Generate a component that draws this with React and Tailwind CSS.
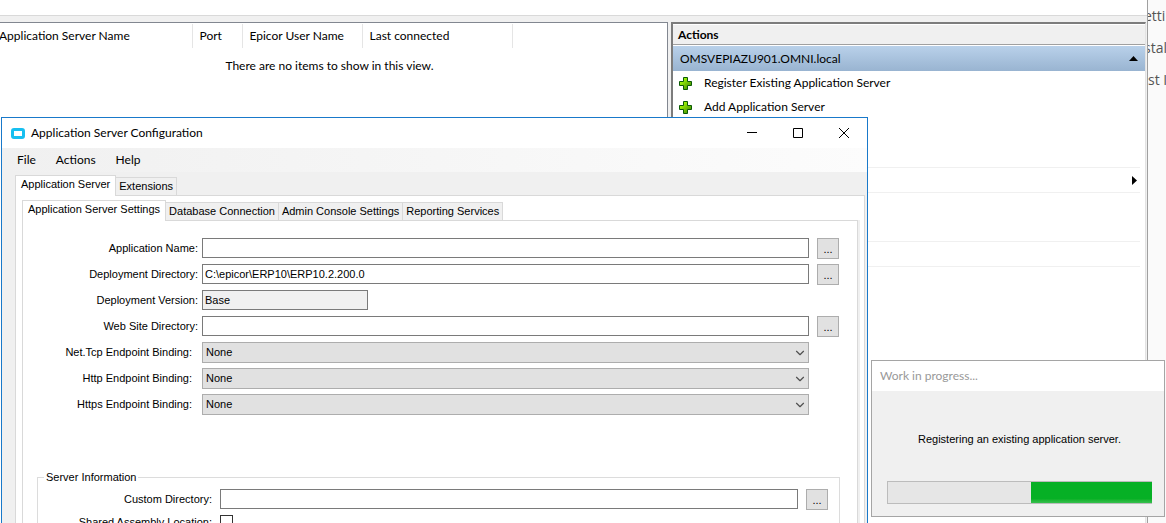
import { useState } from 'react';
import { ChevronDown } from 'lucide-react';

const columns = ['Application Server Name', 'Port', 'Epicor User Name', 'Last connected'];
const bindings = ['Net.Tcp Endpoint Binding:', 'Http Endpoint Binding:', 'Https Endpoint Binding:'];
const settingsTabs = ['Application Server Settings', 'Database Connection', 'Admin Console Settings', 'Reporting Services'];

const PlusIcon = () => (
  <svg width="13" height="13" viewBox="0 0 13 13" className="shrink-0">
    <defs>
      <linearGradient id="plus" x1="0" y1="0" x2="1" y2="1">
        <stop offset="0.2" stopColor="#a4fa08" />
        <stop offset="1" stopColor="#2f7a00" />
      </linearGradient>
    </defs>
    <path d="M4.5 .5h4v4h4v4h-4v4h-4v-4h-4v-4h4z" fill="url(#plus)" stroke="#0b5a06" />
  </svg>
);

const BrowseButton = ({ label }) => (
  <button
    type="button"
    aria-label={label}
    className="ml-2 h-[21px] w-[22px] border border-[#adadad] bg-[#e1e1e1] text-[11px] leading-4"
  >
    ...
  </button>
);

const TabButton = ({ active, onClick, children }) => (
  <button
    type="button"
    role="tab"
    aria-selected={active}
    onClick={onClick}
    className={
      active
        ? 'relative -mb-px h-[21px] border border-b-0 border-[#d9d9d9] bg-white px-[5px] pb-1 whitespace-nowrap'
        : 'h-[18px] border border-b-0 border-l-0 border-[#d9d9d9] bg-[#f0f0f0] px-[3px] whitespace-nowrap'
    }
  >
    {children}
  </button>
);

const TextRow = ({ id, label, browse, ...props }) => (
  <div className="grid h-[26px] grid-cols-[179px_1fr_30px] items-start">
    <label htmlFor={id} className="pr-1 text-right leading-5">{label}</label>
    <input id={id} type="text" className="h-5 w-full min-w-0 border border-[#7a7a7a] bg-white px-0.5" {...props} />
    {browse && <BrowseButton label={'Browse ' + label} />}
  </div>
);

const BindingRow = ({ id, label }) => (
  <div className="grid h-[26px] grid-cols-[179px_1fr_30px] items-start">
    <label htmlFor={id} className="pr-[10px] text-right leading-5">{label}</label>
    <div className="relative">
      <select id={id} className="block h-[21px] w-full appearance-none border border-[#adadad] bg-[#e1e1e1] px-[3px]">
        <option>None</option>
      </select>
      <ChevronDown size={14} strokeWidth={2} className="pointer-events-none absolute top-1 right-0.5 text-[#505050]" />
    </div>
  </div>
);

const ServerList = () => (
  <div className="min-w-0 flex-1 overflow-hidden border-t border-r border-[#828790] bg-white">
    <div className="-ml-2">
      <table className="mt-px w-full table-fixed border-collapse text-left">
        <colgroup>
          <col className="w-[200px]" />
          <col className="w-[50px]" />
          <col className="w-[120px]" />
          <col className="w-[150px]" />
          <col />
        </colgroup>
        <thead>
          <tr className="h-6">
            {columns.map((name) => (
              <th key={name} className="border-r border-[#e5e5e5] pl-[7px] font-normal whitespace-nowrap">{name}</th>
            ))}
            <th></th>
          </tr>
        </thead>
        <tbody>
          <tr className="h-9">
            <td colSpan={5} className="text-center">There are no items to show in this view.</td>
          </tr>
        </tbody>
      </table>
    </div>
  </div>
);

const ActionsPane = () => (
  <aside className="w-[475px] shrink-0 border-2 border-r border-b-0 border-[#7c7c7c] border-r-[#e3e3e3] bg-white">
    <h2 className="mt-px h-5 border-b border-[#a0a0a0] bg-[#f0f0f0] pl-[5px] leading-[19px] font-bold">Actions</h2>
    <div className="mt-px flex h-[25px] items-center justify-between bg-linear-to-b from-[#b9d1ea] to-[#99b4d1] pr-[7px] pl-[7px]">
      <span>OMSVEPIAZU901.OMNI.local</span>
      <svg width="9" height="5" viewBox="0 0 9 5"><path d="M4.5 0 9 5H0z" /></svg>
    </div>
    {['Register Existing Application Server', 'Add Application Server'].map((action) => (
      <button key={action} type="button" className="flex h-6 w-full items-center gap-3 pl-1.5">
        <PlusIcon />
        {action}
      </button>
    ))}
    <div className="mt-12 mr-[5px]">
      <div className="flex h-[25px] items-center justify-end border-t border-[#f0f0f0] pr-[3px]">
        <svg width="5" height="9" viewBox="0 0 5 9"><path d="M0 0 5 4.5 0 9z" /></svg>
      </div>
      <div className="h-[49px] border-t border-[#f0f0f0]" />
      <div className="h-[26px] border-y border-[#f0f0f0]" />
    </div>
  </aside>
);

const ConfigurationWindow = () => {
  const [page, setPage] = useState(0);
  const [settingsPage, setSettingsPage] = useState(0);

  return (
    <section className="absolute top-[117px] right-[298px] left-px flex h-[560px] flex-col border border-[#1979ca] bg-[#f0f0f0]">
      <header className="flex h-[30px] shrink-0 items-center bg-white pl-[9px]">
        <svg width="14" height="11" viewBox="0 0 14 11">
          <rect x="1.5" y="1.5" width="11" height="8" rx="1.5" fill="white" stroke="#17bff0" strokeWidth="3" />
        </svg>
        <h1 className="flex-1 pl-1.5">Application Server Configuration</h1>
        <div className="flex">
          <button type="button" aria-label="Minimize" className="flex h-[30px] w-[46px] items-center justify-center">
            <svg width="10" height="10" viewBox="0 0 10 10"><path d="M0 4.5h10" stroke="black" /></svg>
          </button>
          <button type="button" aria-label="Maximize" className="flex h-[30px] w-[46px] items-center justify-center">
            <svg width="10" height="10" viewBox="0 0 10 10"><path d="M.5.5h9v9h-9z" fill="none" stroke="black" /></svg>
          </button>
          <button type="button" aria-label="Close" className="flex h-[30px] w-[46px] items-center justify-center">
            <svg width="10" height="10" viewBox="0 0 10 10"><path d="M0 0l10 10M10 0 0 10" stroke="black" /></svg>
          </button>
        </div>
      </header>

      <nav className="flex h-6 shrink-0 items-center gap-5 bg-linear-to-r from-[#f0f0f0] to-[#fcfcfc] pl-[15px]">
        <button type="button">File</button>
        <button type="button">Actions</button>
        <button type="button">Help</button>
      </nav>

      <div className="flex min-h-0 flex-1 flex-col pt-[3px] pr-0.5 pl-[13px] font-['Liberation_Sans',Arial,sans-serif] text-[11px]">
        <div role="tablist" className="flex h-5 shrink-0 items-end">
          {['Application Server', 'Extensions'].map((name, i) => (
            <TabButton key={name} active={page === i} onClick={() => setPage(i)}>{name}</TabButton>
          ))}
        </div>

        <div className="flex min-h-0 flex-1 flex-col border border-[#d9d9d9] bg-white pt-1 pr-1.5 pl-1.5">
          <div role="tablist" className="flex h-5 shrink-0 items-end">
            {settingsTabs.map((name, i) => (
              <TabButton key={name} active={settingsPage === i} onClick={() => setSettingsPage(i)}>{name}</TabButton>
            ))}
          </div>

          <form className="min-h-0 flex-1 border border-[#d9d9d9] pt-[17px] shadow-[2px_0_0_#f0f0f0]">
            <div className="pr-[18px]">
              <TextRow id="app-name" label="Application Name:" browse />
              <TextRow id="deploy-dir" label="Deployment Directory:" defaultValue="C:\epicor\ERP10\ERP10.2.200.0" browse />
              <div className="grid h-[26px] grid-cols-[179px_166px] items-start">
                <label htmlFor="deploy-version" className="pr-1 text-right leading-5">Deployment Version:</label>
                <input id="deploy-version" type="text" readOnly value="Base" className="h-5 border border-[#7a7a7a] bg-[#f0f0f0] px-0.5" />
              </div>
              <TextRow id="site-dir" label="Web Site Directory:" browse />
              {bindings.map((label, i) => (
                <BindingRow key={label} id={'binding-' + i} label={label} />
              ))}
            </div>

            <fieldset className="mt-[49px] mr-[17px] ml-[14px] h-[180px] border border-[#dcdcdc] pr-[11px]">
              <legend className="ml-1.5 px-0.5 leading-4">Server Information</legend>
              <div className="mt-1 grid h-[26px] grid-cols-[182px_1fr_30px] items-start">
                <label htmlFor="custom-dir" className="pr-2 text-right leading-5">Custom Directory:</label>
                <input id="custom-dir" type="text" className="h-5 w-full min-w-0 border border-[#7a7a7a] bg-white px-0.5" />
                <BrowseButton label="Browse Custom Directory" />
              </div>
              <div className="grid grid-cols-[182px_1fr] items-start">
                <label htmlFor="shared-assembly" className="pr-2 text-right leading-[14px]">Shared Assembly Location:</label>
                <input id="shared-assembly" type="checkbox" className="size-[13px] appearance-none border border-[#333333] bg-white" />
              </div>
            </fieldset>
          </form>
        </div>
      </div>
    </section>
  );
};

const ProgressDialog = () => (
  <section className="absolute top-[360px] right-px flex h-[157px] w-[294px] flex-col border border-[#a5a5a5] bg-[#f0f0f0]">
    <h2 className="h-[30px] bg-white pl-2 leading-[30px] text-[#999999]">Work in progress...</h2>
    <div className="flex flex-1 flex-col justify-between pt-10 pr-3 pb-3 pl-[15px] font-['Liberation_Sans',Arial,sans-serif] text-[11px]">
      <p className="text-center leading-4">Registering an existing application server.</p>
      <div role="progressbar" aria-label="Registering" className="flex h-[23px] justify-end border border-r-0 border-[#bcbcbc] bg-[#e6e6e6]">
        <div className="w-[46%] bg-linear-to-b from-[#06b025] from-80% to-[#35c04e]" />
      </div>
    </div>
  </section>
);

const App = () => (
  <div className="relative flex h-screen overflow-hidden bg-[#fafafa] font-[Lato,'Open_Sans',sans-serif] text-[12px] text-black">
    <main className="flex min-w-0 flex-1 flex-col border-r border-[#a0a0a0] bg-white">
      <div className="h-4 shrink-0 border-b border-[#d9d9d9]" />
      <div className="flex min-h-0 flex-1 gap-[3px] bg-[#f0f0f0] pt-1.5 pr-px">
        <ServerList />
        <ActionsPane />
      </div>
    </main>

    {/* page behind the console */}
    <div className="w-[18px] shrink-0 overflow-hidden font-['Open_Sans',sans-serif] text-[14px] leading-8 whitespace-nowrap text-[#555555]">
      <p className="-ml-1">ettin</p>
      <p className="-ml-1">stal</p>
      <p>st I</p>
    </div>

    <ConfigurationWindow />
    <ProgressDialog />
  </div>
);

export default App;
